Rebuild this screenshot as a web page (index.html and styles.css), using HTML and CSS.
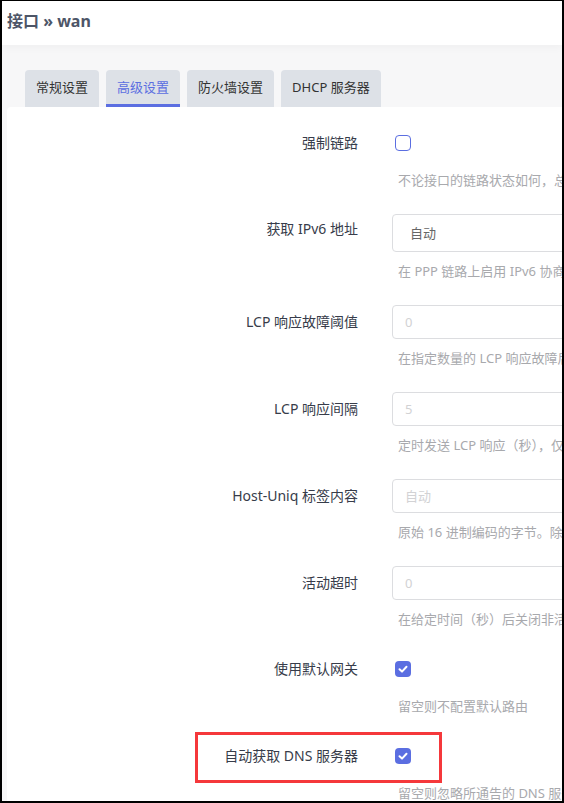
FILE: index.html
```html
<!DOCTYPE html>
<html lang="zh-CN">
  <head>
    <meta charset="UTF-8" />
    <title>接口 - wan</title>
    <link rel="stylesheet" href="styles.css">
  </head>
  <body>
    <div class="frame">
      <!-- ページタイトル -->
      <header class="page-header">
        <h2 class="page-title">接口 » wan</h2>
      </header>

      <main class="page-body">
        <!-- タブ -->
        <ul class="tabs">
          <li class="tab">常规设置</li>
          <li class="tab tab-active">高级设置</li>
          <li class="tab">防火墙设置</li>
          <li class="tab">DHCP 服务器</li>
        </ul>

        <section class="panel">
          <div class="form-row">
            <label class="form-label form-label-check">强制链路</label>
            <div class="form-field">
              <div class="check-wrap"><span class="checkbox"></span></div>
              <div class="form-help form-help-check">不论接口的链路状态如何，总是设置协议的 IP 地址</div>
            </div>
          </div>

          <div class="form-row">
            <label class="form-label form-label-select">获取 IPv6 地址</label>
            <div class="form-field">
              <div class="select">自动</div>
              <div class="form-help">在 PPP 链路上启用 IPv6 协商</div>
            </div>
          </div>

          <div class="form-row">
            <label class="form-label">LCP 响应故障阈值</label>
            <div class="form-field">
              <input class="text-input" type="text" placeholder="0" />
              <div class="form-help">在指定数量的 LCP 响应故障后假定链路已断开，0 为忽略故障</div>
            </div>
          </div>

          <div class="form-row">
            <label class="form-label">LCP 响应间隔</label>
            <div class="form-field">
              <input class="text-input" type="text" placeholder="5" />
              <div class="form-help">定时发送 LCP 响应（秒），仅在结合了故障阈值时有效</div>
            </div>
          </div>

          <div class="form-row">
            <label class="form-label">Host-Uniq 标签内容</label>
            <div class="form-field">
              <input class="text-input" type="text" placeholder="自动" />
              <div class="form-help">原始 16 进制编码的字节。除非您的 ISP 要求，否则请留空</div>
            </div>
          </div>

          <div class="form-row">
            <label class="form-label">活动超时</label>
            <div class="form-field">
              <input class="text-input" type="text" placeholder="0" />
              <div class="form-help">在给定时间（秒）后关闭非活动链接，0 为保持连接</div>
            </div>
          </div>

          <div class="form-row">
            <label class="form-label form-label-check">使用默认网关</label>
            <div class="form-field">
              <div class="check-wrap">
                <span class="checkbox checkbox-on">
                  <svg viewBox="0 0 16 16" width="16" height="16"><polyline points="4.5,8.3 7,10.6 11.5,5.8" fill="none" stroke="#fff" stroke-width="2" stroke-linecap="round" stroke-linejoin="round"/></svg>
                </span>
              </div>
              <div class="form-help form-help-check">留空则不配置默认路由</div>
            </div>
          </div>

          <div class="form-row">
            <label class="form-label form-label-check">自动获取 DNS 服务器</label>
            <div class="form-field">
              <div class="check-wrap">
                <span class="checkbox checkbox-on">
                  <svg viewBox="0 0 16 16" width="16" height="16"><polyline points="4.5,8.3 7,10.6 11.5,5.8" fill="none" stroke="#fff" stroke-width="2" stroke-linecap="round" stroke-linejoin="round"/></svg>
                </span>
              </div>
              <div class="form-help form-help-check">留空则忽略所通告的 DNS 服务器地址</div>
            </div>
          </div>
        </section>
      </main>

      <!-- 注目枠 -->
      <div class="highlight"></div>
    </div>
  </body>
</html>
```

FILE: styles.css
```css
html,
body {
  margin: 0;
  padding: 0;
  background-color: #fff;
}

/* 画面全体の枠 */
.frame {
  position: relative;
  width: 564px;
  height: 803px;
  box-sizing: border-box;
  border: 2px solid #000;
  border-top-width: 1px;
  overflow: hidden;
  background-color: #f7f7f8;
  font-family: "Noto Sans", "Noto Sans CJK SC", sans-serif;
}

.page-header {
  height: 44px;
  background-color: #fff;
  box-shadow: 0 3px 8px rgba(0, 0, 0, 0.03);
  position: relative;
}

.page-title {
  margin: 0;
  padding: 10px 0 0 5px;
  font-size: 16px;
  line-height: 20px;
  font-weight: 700;
  color: #4d5567;
}

.page-body {
  padding: 25px 0 0 5px;
}

/* タブ */
.tabs {
  display: flex;
  gap: 7px;
  list-style: none;
  margin: 0;
  padding: 0 0 0 18px;
}

.tab {
  height: 37px;
  line-height: 35px;
  padding: 0 11px;
  box-sizing: border-box;
  background-color: #dde1e7;
  border-radius: 4px 4px 0 0;
  font-size: 13px;
  color: #333;
  white-space: nowrap;
}

.tab-active {
  color: #5b6ee1;
  border-bottom: 3px solid #5b6ee1;
}

.panel {
  width: 640px;
  min-height: 720px;
  padding-top: 20px;
  background-color: #fff;
  border-radius: 4px 0 0 0;
}

/* フォーム行 */
.form-row {
  display: flex;
  gap: 34px;
  margin-bottom: 25px;
}

.form-label {
  width: 351px;
  flex-shrink: 0;
  padding-top: 7px;
  text-align: right;
  font-size: 14px;
  line-height: 20px;
  color: #373c4a;
  white-space: nowrap;
}

.form-label-check {
  padding-top: 6px;
}

.form-label-select {
  padding-top: 5px;
}

.form-field {
  width: 300px;
  display: flex;
  flex-direction: column;
}

.check-wrap {
  height: 32px;
  display: flex;
  align-items: center;
  padding-left: 3px;
}

.checkbox {
  display: flex;
  width: 16px;
  height: 16px;
  box-sizing: border-box;
  border: 1.5px solid #5b6ee1;
  border-radius: 4px;
}

.checkbox-on {
  border: none;
  background-color: #5b6ee1;
}

.select,
.text-input {
  width: 100%;
  box-sizing: border-box;
  border: 1px solid #dcdde0;
  border-radius: 4px;
  background-color: #fff;
  font-family: inherit;
  font-size: 13px;
}

.select {
  height: 38px;
  line-height: 36px;
  padding-left: 17px;
  color: #666;
}

.text-input {
  height: 34px;
  padding: 0 12px;
  outline: none;
}

.text-input::placeholder {
  color: #d2d2d4;
}

.form-help {
  margin-top: 10px;
  padding-left: 6px;
  font-size: 13px;
  line-height: 18px;
  color: #a8a9ad;
  white-space: nowrap;
}

.form-help-check {
  margin-top: 12px;
}

/* 赤い注目枠 */
.highlight {
  position: absolute;
  left: 193px;
  top: 731px;
  width: 247px;
  height: 51px;
  box-sizing: border-box;
  border: 3px solid #f5383b;
}
```
